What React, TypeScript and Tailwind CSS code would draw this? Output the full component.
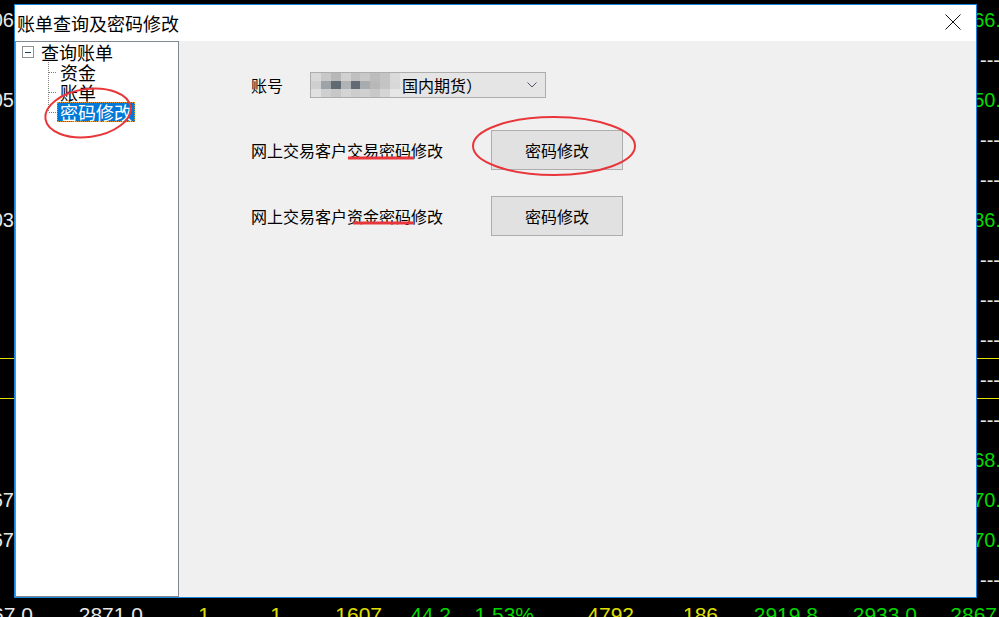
import React from "react";

type ChartRow = { left?: string; right?: string; dash?: boolean };

const chartRows: ChartRow[] = [
  { left: "2906", right: "3566.0" },
  { dash: true },
  { left: "2905", right: "3550.0" },
  { dash: true },
  { dash: true },
  { left: "2903", right: "2886.0" },
  { dash: true },
  { dash: true },
  { dash: true },
  { dash: true },
  { dash: true },
  { right: "3568.0" },
  { left: "2867", right: "3570.0" },
  { left: "2867", right: "3570.0" },
  { dash: true },
];

// quote row at the bottom of the market window
const quoteCells = [
  { v: "2867.0", w: "w-[33px]", c: "text-[#e8e8e8]" },
  { v: "2871.0", w: "w-[110px]", c: "text-[#e8e8e8]" },
  { v: "1", w: "w-[67px]", c: "text-[#e0e000]" },
  { v: "1", w: "w-[72px]", c: "text-[#e0e000]" },
  { v: "1607", w: "w-[100px]", c: "text-[#e0e000]" },
  { v: "44.2", w: "w-[69px]", c: "text-[#00d800]" },
  { v: "1.53%", w: "w-[83px]", c: "text-[#00d800]" },
  { v: "4792", w: "w-[100px]", c: "text-[#e0e000]" },
  { v: "186", w: "w-[84px]", c: "text-[#e0e000]" },
  { v: "2919.8", w: "w-[100px]", c: "text-[#00d800]" },
  { v: "2933.0", w: "w-[99px]", c: "text-[#00d800]" },
  { v: "2867", w: "w-[80px]", c: "text-[#00d800]" },
];

const mosaic = [
  ["bg-[#d9d9d9]", "bg-[#c8c8c8]", "bg-[#b8b8b8]", "bg-[#d0d0d0]", "bg-[#c0c0c0]", "bg-[#c8c8c8]", "bg-[#bcbcbc]", "bg-[#c4c4c4]", "bg-[#dadada]"],
  ["bg-[#cfcfcf]", "bg-[#9ea3a8]", "bg-[#5f6a73]", "bg-[#b0b3b6]", "bg-[#626b74]", "bg-[#a9acae]", "bg-[#b8b8b8]", "bg-[#c4c4c4]", "bg-[#d8d8d8]"],
  ["bg-[#e0e0e0]", "bg-[#cfcfcf]", "bg-[#c7c7c7]", "bg-[#d4d4d4]", "bg-[#cdcdcd]", "bg-[#d0d0d0]", "bg-[#c8c8c8]", "bg-[#d5d5d5]", "bg-[#e6e6e6]"],
];

function Chart() {
  return (
    <div className="absolute inset-0 font-['Liberation_Sans',sans-serif] text-[20px] leading-none">
      <div className="absolute left-0 top-[358px] h-px w-full bg-[#e0e000]" />
      <div className="absolute left-0 top-[398px] h-px w-full bg-[#e0e000]" />
      <div className="flex flex-col">
        {chartRows.map((r, i) => (
          <div key={i} className="flex h-[40px] items-center">
            <div className="flex w-[14px] justify-end overflow-hidden whitespace-nowrap text-[#e8e8e8]">
              {r.left}
            </div>
            <div className="flex-1" />
            <div className="w-[48px] overflow-hidden whitespace-nowrap">
              {r.dash ? (
                <span className="pl-[29px] text-[#e8e8e8]">---</span>
              ) : (
                <span className="text-[#00d800]">{r.right}</span>
              )}
            </div>
          </div>
        ))}
        <div className="flex h-[28px] items-center whitespace-nowrap text-[21px]">
          {quoteCells.map((q, i) => (
            <div key={i} className={`${q.w} ${q.c} flex shrink-0 justify-end overflow-hidden`}>
              {q.v}
            </div>
          ))}
        </div>
      </div>
    </div>
  );
}

function Connector({ last }: { last?: boolean }) {
  return (
    <svg width="9" height="20" className="shrink-0">
      <line x1="0.5" y1="0" x2="0.5" y2={last ? 10 : 20} stroke="#808080" strokeDasharray="1 1" />
      <line x1="1" y1="10.5" x2="9" y2="10.5" stroke="#808080" strokeDasharray="1 1" />
    </svg>
  );
}

function Tree() {
  const kids = ["资金", "账单", "密码修改"];
  return (
    <div className="w-[164px] shrink-0 border border-[#828790] bg-white text-[18px] leading-[20px] text-black">
      <div className="flex h-[20px] items-center pl-[6px]">
        <div className="flex h-[12px] w-[12px] items-center justify-center border border-[#919191] bg-white">
          <div className="h-px w-[6px] bg-[#2c3e50]" />
        </div>
        <span className="ml-[7px]">查询账单</span>
      </div>
      {kids.map((k, i) => {
        const sel = i === kids.length - 1;
        return (
          <div key={k} className="flex h-[20px] items-center pl-[32px]">
            <Connector last={sel} />
            <span
              className={
                sel
                  ? "flex h-[20px] items-center border border-dotted border-[#e0902a] bg-[#0078d7] px-[2px] text-white"
                  : "flex h-[20px] items-center border border-transparent px-[2px]"
              }
            >
              {k}
            </span>
          </div>
        );
      })}
    </div>
  );
}

function Button({ label }: { label: string }) {
  return (
    <div className="flex h-[40px] w-[132px] items-center justify-center border border-[#adadad] bg-[#e1e1e1] text-[16px] text-black">
      {label}
    </div>
  );
}

function Content() {
  return (
    <div className="flex flex-1 flex-col pl-[72px] pt-[31px] text-[16px] leading-[20px] text-black">
      <div className="flex h-[26px] items-center">
        <span className="w-[59px]">账号</span>
        <div className="flex h-[26px] w-[236px] items-center border border-[#adadad] bg-[#e5e5e5]">
          <div className="grid h-[24px] w-[89px] grid-cols-9 blur-[0.6px]">
            {mosaic.flat().map((c, i) => (
              <div key={i} className={c} />
            ))}
          </div>
          <span className="ml-[2px]">国内期货）</span>
          <svg width="10" height="6" className="ml-auto mr-[8px]">
            <path d="M0.5 0.5 L5 5 L9.5 0.5" fill="none" stroke="#5c4c6c" strokeWidth="1" />
          </svg>
        </div>
      </div>
      <div className="mt-[32px] flex h-[40px] items-center">
        <span className="w-[240px]">网上交易客户交易密码修改</span>
        <Button label="密码修改" />
      </div>
      <div className="mt-[26px] flex h-[40px] items-center">
        <span className="w-[240px]">网上交易客户资金密码修改</span>
        <Button label="密码修改" />
      </div>
    </div>
  );
}

export default function App() {
  return (
    <div className="relative h-[617px] w-[999px] overflow-hidden bg-black font-['Noto_Sans_CJK_SC',sans-serif]">
      <Chart />
      <div className="absolute left-[14px] top-[4px] flex h-[594px] w-[963px] flex-col border border-[#1883d7] bg-[#f0f0f0]">
        <div className="flex h-[36px] shrink-0 items-center bg-white">
          <span className="pl-[2px] text-[18px] leading-none text-black">账单查询及密码修改</span>
          <div className="ml-auto flex h-full w-[46px] items-center justify-center pb-[3px]">
            <svg width="16" height="16">
              <path d="M0.5 0.5 L15.5 15.5 M15.5 0.5 L0.5 15.5" stroke="#111" strokeWidth="1" />
            </svg>
          </div>
        </div>
        <div className="flex flex-1">
          <Tree />
          <Content />
        </div>
      </div>
      {/* red markup drawn over the screenshot */}
      <svg className="pointer-events-none absolute left-0 top-0" width="999" height="617">
        <ellipse cx="88" cy="113" rx="43" ry="24" transform="rotate(-8 88 113)" fill="none" stroke="#e8363a" strokeWidth="2" />
        <ellipse cx="554" cy="146" rx="81" ry="29" fill="none" stroke="#e8363a" strokeWidth="2" />
        <line x1="348" y1="158" x2="414" y2="158" stroke="#e8363a" strokeWidth="3" />
        <line x1="353" y1="223" x2="413" y2="223" stroke="#e8363a" strokeWidth="3" />
      </svg>
    </div>
  );
}
